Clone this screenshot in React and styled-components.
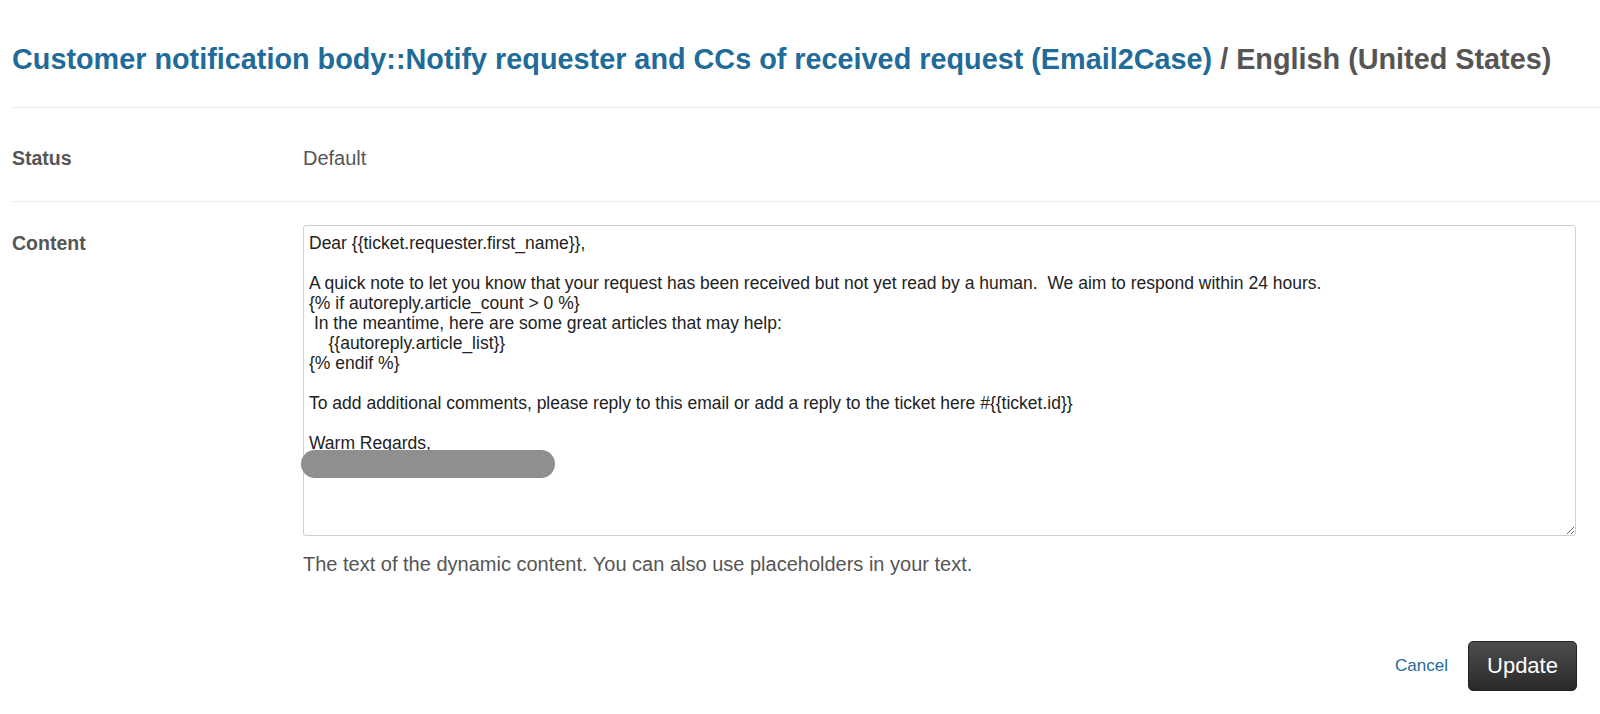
import React from "react";
import styled, { createGlobalStyle } from "styled-components";

const GlobalStyle = createGlobalStyle`
  body {
    margin: 0;
    background: #ffffff;
    font-family: "Liberation Sans", Arial, sans-serif;
    color: #555555;
  }
`;

const Page = styled.div`
  padding-left: 12px;
`;

const Heading = styled.h1`
  margin: 0;
  padding: 41px 0 30px;
  font-size: 28.8px;
  line-height: 36px;
  font-weight: 700;
  white-space: nowrap;
  color: #555555;
`;

const HeadingLink = styled.span`
  color: #1f6b99;
`;

const Row = styled.div`
  display: grid;
  grid-template-columns: 291px 1fr;
  border-top: 1px solid #ededed;
  padding: ${(p) => p.$pad};
`;

const Label = styled.div`
  font-size: 19.5px;
  line-height: 24px;
  font-weight: 700;
  color: #555555;
  padding-top: ${(p) => p.$top || 0}px;
`;

const Value = styled.div`
  font-size: 20px;
  line-height: 24px;
  color: #555555;
`;

const Field = styled.div`
  width: 1273px;
`;

const EditorWrap = styled.div`
  position: relative;
`;

const Editor = styled.textarea`
  display: block;
  box-sizing: border-box;
  width: 100%;
  height: 311px;
  margin: 0;
  padding: 7px 5px;
  border: 1px solid #d0d0d0;
  border-radius: 3px;
  font-family: "Liberation Sans", Arial, sans-serif;
  font-size: 17.5px;
  line-height: 20px;
  color: #222222;
  background: #ffffff;
  resize: vertical;
  outline: none;
`;

const Redacted = styled.div`
  position: absolute;
  left: -2px;
  top: 225px;
  width: 254px;
  height: 28px;
  border-radius: 14px;
  background: #8f8f8f;
`;

const Hint = styled.p`
  margin: 16px 0 0;
  font-size: 20px;
  line-height: 24px;
  color: #555555;
`;

const Footer = styled.div`
  display: flex;
  justify-content: flex-end;
  align-items: center;
  gap: 20px;
  width: 1565px;
  margin-top: 65px;
`;

const CancelLink = styled.a`
  font-size: 17px;
  color: #1f6b99;
  text-decoration: none;
  cursor: pointer;
`;

const UpdateButton = styled.button`
  width: 109px;
  height: 50px;
  border: 1px solid #222222;
  border-radius: 5px;
  background: linear-gradient(#4d4d4d, #2a2a2a);
  color: #ffffff;
  font-family: "Liberation Sans", Arial, sans-serif;
  font-size: 22px;
  cursor: pointer;
`;

const body = `Dear {{ticket.requester.first_name}},

A quick note to let you know that your request has been received but not yet read by a human.  We aim to respond within 24 hours.
{% if autoreply.article_count > 0 %}
 In the meantime, here are some great articles that may help:
    {{autoreply.article_list}}
{% endif %}

To add additional comments, please reply to this email or add a reply to the ticket here #{{ticket.id}}

Warm Regards,
`;

export default function App() {
  return (
    <Page>
      <GlobalStyle />
      <Heading>
        <HeadingLink>
          Customer notification body::Notify requester and CCs of received request (Email2Case)
        </HeadingLink>{" "}
        / English (United States)
      </Heading>
      <Row $pad="38px 0 31px">
        <Label>Status</Label>
        <Value>Default</Value>
      </Row>
      <Row $pad="23px 0 0">
        <Label $top={6}>Content</Label>
        <Field>
          <EditorWrap>
            <Editor defaultValue={body} spellCheck={false} />
            <Redacted />
          </EditorWrap>
          <Hint>The text of the dynamic content. You can also use placeholders in your text.</Hint>
        </Field>
      </Row>
      <Footer>
        <CancelLink>Cancel</CancelLink>
        <UpdateButton>Update</UpdateButton>
      </Footer>
    </Page>
  );
}
